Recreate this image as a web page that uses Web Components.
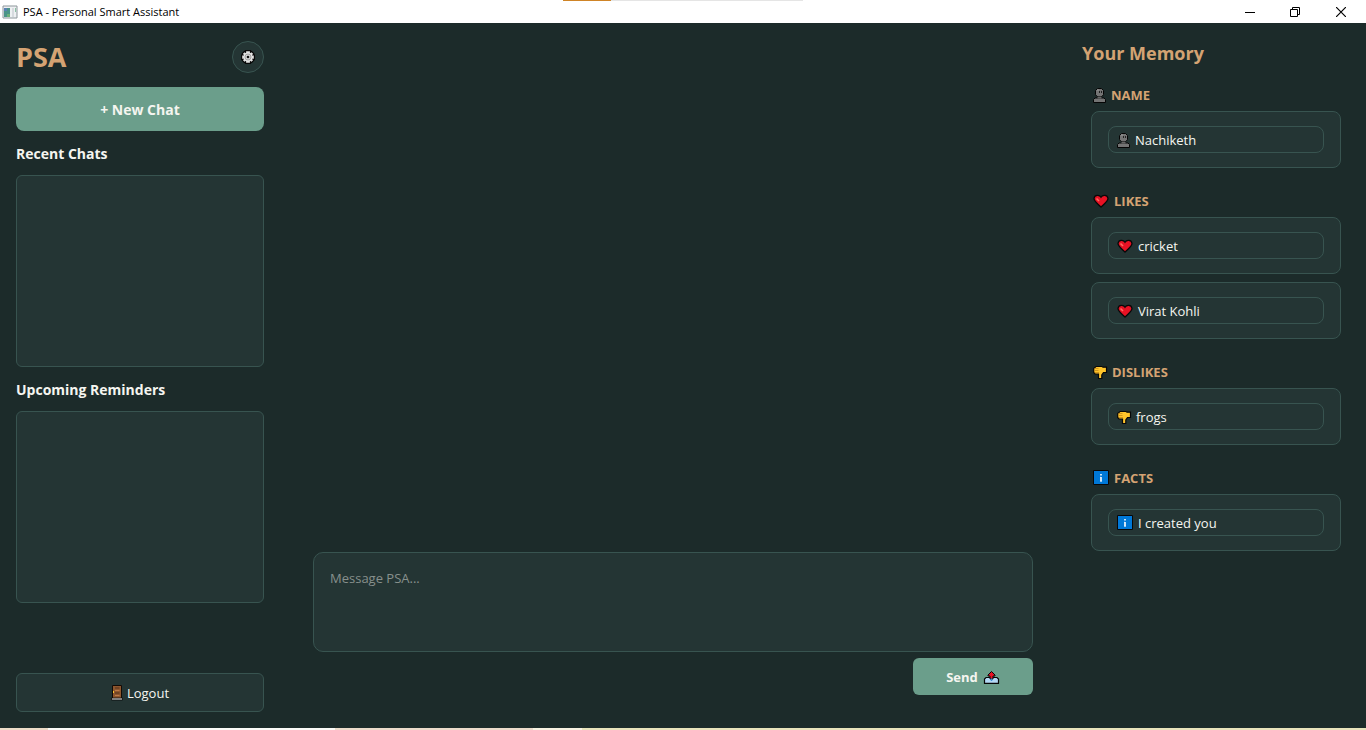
<!DOCTYPE html>
<html lang="en">
<head>
<meta charset="utf-8">
<title>PSA - Personal Smart Assistant</title>
<style>
  html, body {
    height: 100%;
    margin: 0;
  }

  body {
    --bg: #1c2b2a;
    --panel: #243534;
    --line: #385450;
    --accent: #6b9e8b;
    --gold: #d4a373;
    --text: #f5f5f0;
    font-family: "Open Sans", "Noto Sans", sans-serif;
    font-size: 13px;
    line-height: 18px;
    color: var(--text);
    background: var(--bg);
  }
</style>
</head>
<body>
<psa-window>
  <psa-titlebar slot="title">PSA - Personal Smart Assistant</psa-titlebar>
  <psa-sidebar slot="left"></psa-sidebar>
  <psa-composer></psa-composer>
  <psa-memory slot="right">
    <memory-section icon="person" label="NAME">
      <memory-card icon="person">Nachiketh</memory-card>
    </memory-section>
    <memory-section icon="heart" label="LIKES">
      <memory-card icon="heart">cricket</memory-card>
      <memory-card icon="heart">Virat Kohli</memory-card>
    </memory-section>
    <memory-section icon="thumb" label="DISLIKES">
      <memory-card icon="thumb">frogs</memory-card>
    </memory-section>
    <memory-section icon="info" label="FACTS">
      <memory-card icon="info">I created you</memory-card>
    </memory-section>
  </psa-memory>
</psa-window>

<script>
const ICONS = {
  person: { w: 14, h: 16, body: `
    <path d="M.5 15.500V12.500L2 11h9l1.500 1.500v3z" fill="#747474" stroke="#050505"/>
    <path d="M4.500 1.500h4l2 2v4L9 9.500H4L2.500 7.500v-4z" fill="#747474" stroke="#050505"/>
    <path d="M4.500 9.500h4v2h-4z" fill="#666"/>
    <path d="M4 3h2" stroke="#999"/>
    <path d="M6.500 4v2M8.500 4v2" stroke="#222"/>` },
  heart: { w: 17, h: 16, body: `
    <path d="M8 4.200C6.500 1.500 1.500 1.500 1 5.500c0 3 3.500 5 7 8.500 3.500-3.500 7-5.500 7-8.500-.5-4-5.500-4-7-1.300z" fill="#e81224" stroke="#080808" stroke-width="1.300"/>
    <path d="M3.500 5.500l2.500 2.500" stroke="#ff6b62" stroke-width="1.600"/>` },
  thumb: { w: 15, h: 16, body: `
    <path d="M3 2.500h6l1 .7h3.500v5.300h-3L8.800 11v3.500H5.500V10H2L.700 8.500V4.500z" fill="#ffc52b" stroke="#080808" stroke-width="1.200"/>
    <path d="M1.500 4.500h4M1.500 6.500h4M2 8.500h4" stroke="#c98a1a" stroke-width=".8"/>` },
  info: { w: 17, h: 16, body: `
    <path d="M.5.500h15v14H.5z" fill="#0078d7" stroke="#080808"/>
    <path d="M8 4v1.500M8 7v4.500" stroke="#fff" stroke-width="1.600"/>
    <path d="M7 7.300h1M7 11h2" stroke="#e8f3ff" stroke-width=".8"/>` },
  gear: { w: 14, h: 14, body: `
    <path d="M4.500.700h5v1.500l1.200-.7 2 2-.7 1.300h1.400v4.500H12l.7 1.200-2 2-1.200-.7v1.500h-5v-1.500l-1.200.7-2-2 .7-1.200H.6V4.800H2l-.7-1.300 2-2 1.200.7z" fill="#e4e4e4" stroke="#080808" stroke-width="1.200"/>
    <circle cx="7" cy="7" r="3" fill="#d5d5d5" stroke="#a2a2a2"/>
    <circle cx="7" cy="7" r="1.300" fill="#111"/>` },
  door: { w: 12, h: 16, body: `
    <path d="M1.500.500h9v13h-9z" fill="#8e562e" stroke="#120b06"/>
    <path d="M4 3h4.500M4 8h4.500" stroke="#53301a"/>
    <path d="M4 5.500h4.500M4 10.500h4.500" stroke="#bd7a46"/>
    <path d="M2.500 6v2" stroke="#ffc52b"/>
    <path d="M.5 13h11v2H.5z" fill="#d0d0d0" stroke="#080808" stroke-width=".8"/>` },
  outbox: { w: 17, h: 14, body: `
    <path d="M3 7.500h11l1.500 1.500v4.300h-14V9z" fill="#b4d9f5" stroke="#080808" stroke-width="1.200"/>
    <path d="M8.500 1.500L5 5v1h2v3h3V6h2V5z" fill="#e81224" stroke="#080808"/>
    <path d="M8.500 8.500V11" stroke="#3b8ed8" stroke-width="1.500"/>` },
  app: { w: 16, h: 14, body: `
    <path d="M1 1h14v12H1z" fill="#eef0f2" stroke="#8d969b"/>
    <path d="M2 3h6v9H2z" fill="#4b9488"/>
    <path d="M2 3h3v3H2z" fill="#5b82b5"/>
    <path d="M5 9h3v3H5z" fill="#6bb078"/>
    <path d="M10 3h2v9h-2z" fill="#d6dade"/>
    <path d="M13 3h1v4h-1z" fill="#8cc2a5"/>` },
  minimize: { w: 10, h: 10, body: `<path d="M0 5.500h10" stroke="#000"/>` },
  restore: { w: 10, h: 10, body: `<path d="M.5 2.500h7v7h-7zM2.500 2V.500h7v7H8" fill="none" stroke="#000"/>` },
  close: { w: 10, h: 10, body: `<path d="M0 0l10 10M10 0L0 10" stroke="#000" stroke-width="1.200"/>` }
};

function render(el, html) {
  el.attachShadow({ mode: 'open' });
  el.shadowRoot.innerHTML = html;
}

class PsaIcon extends HTMLElement {
  connectedCallback() {
    const icon = ICONS[this.getAttribute('name')];
    render(this, `
      <style>
        :host { display: inline-block; flex: none; line-height: 0; }
      </style>
      <svg width="${icon.w}" height="${icon.h}" viewBox="0 0 ${icon.w} ${icon.h}" fill="none" aria-hidden="true">${icon.body}</svg>
    `);
  }
}

class PsaWindow extends HTMLElement {
  connectedCallback() {
    render(this, `
      <style>
        :host {
          display: flex;
          flex-direction: column;
          min-height: 100vh;
        }

        .columns {
          flex: 1;
          display: grid;
          grid-template-columns: 280px 1fr 300px;
        }

        .edge {
          height: 2px;
          background: linear-gradient(90deg, #eddcc8 3.5%, #fbfbf8 3.5% 24.5%, #ecdccb 24.5% 39%, #f8f3e2 39% 42.6%, #e8e4bc 42.6%);
        }
      </style>
      <slot name="title"></slot>
      <div class="columns">
        <slot name="left"></slot>
        <slot></slot>
        <slot name="right"></slot>
      </div>
      <div class="edge"></div>
    `);
  }
}

class PsaTitlebar extends HTMLElement {
  connectedCallback() {
    render(this, `
      <style>
        :host {
          display: flex;
          align-items: center;
          gap: 5px;
          height: 23px;
          padding: 0 1px 0 2px;
          font-size: 11px;
          color: #000;
          background: linear-gradient(90deg, #fff 41.2%, #cf8426 41.2% 44.7%, #e5e5e5 44.7% 58.8%, #fff 58.8%) top / 100% 1px no-repeat #fff;
        }

        .title { flex: 1; }

        .controls { display: flex; }

        button {
          display: flex;
          align-items: center;
          justify-content: center;
          width: 45px;
          height: 20px;
          padding: 0;
          border: 0;
          background: none;
        }

        button:last-child { width: 48px; }
      </style>
      <psa-icon name="app"></psa-icon>
      <span class="title"><slot></slot></span>
      <div class="controls">
        <button type="button" aria-label="Minimize"><psa-icon name="minimize"></psa-icon></button>
        <button type="button" aria-label="Restore"><psa-icon name="restore"></psa-icon></button>
        <button type="button" aria-label="Close"><psa-icon name="close"></psa-icon></button>
      </div>
    `);
  }
}

class PsaSidebar extends HTMLElement {
  connectedCallback() {
    render(this, `
      <style>
        :host {
          display: flex;
          flex-direction: column;
          gap: 12px;
          padding: 16px;
        }

        header {
          display: flex;
          align-items: center;
          justify-content: space-between;
          height: 36px;
        }

        h1, h2 { margin: 0; font-weight: 700; }

        h1 {
          font-size: 27px;
          line-height: 36px;
          color: var(--gold);
        }

        h2 {
          height: 20px;
          font-size: 14px;
          line-height: 22px;
        }

        button {
          display: flex;
          align-items: center;
          justify-content: center;
          box-sizing: border-box;
          padding: 0;
          border: 1px solid var(--line);
          border-radius: 6px;
          font: inherit;
          color: var(--text);
          background: var(--panel);
        }

        .settings {
          width: 32px;
          height: 32px;
          border-radius: 50%;
        }

        .new {
          height: 44px;
          padding-top: 2px;
          border: 0;
          border-radius: 8px;
          font-size: 14px;
          font-weight: 700;
          background: var(--accent);
        }

        .list {
          box-sizing: border-box;
          height: 192px;
          border: 1px solid var(--line);
          border-radius: 6px;
          background: var(--panel);
        }

        .logout {
          gap: 4px;
          height: 39px;
          margin-top: auto;
        }
      </style>
      <header>
        <h1>PSA</h1>
        <button class="settings" type="button" aria-label="Settings"><psa-icon name="gear"></psa-icon></button>
      </header>
      <button class="new" type="button">+ New Chat</button>
      <h2>Recent Chats</h2>
      <div class="list"></div>
      <h2>Upcoming Reminders</h2>
      <div class="list"></div>
      <button class="logout" type="button"><psa-icon name="door"></psa-icon>Logout</button>
    `);
  }
}

class PsaComposer extends HTMLElement {
  connectedCallback() {
    render(this, `
      <style>
        :host {
          display: flex;
          flex-direction: column;
          justify-content: flex-end;
          padding: 33px;
        }

        form {
          display: flex;
          flex-direction: column;
          gap: 6px;
        }

        textarea {
          display: block;
          box-sizing: border-box;
          width: 100%;
          height: 100px;
          padding: 16px;
          border: 1px solid var(--line);
          border-radius: 10px;
          outline: 0;
          resize: none;
          font: inherit;
          color: var(--text);
          background: var(--panel);
        }

        textarea::placeholder { color: #87908c; }

        button {
          display: flex;
          align-items: center;
          justify-content: center;
          align-self: flex-end;
          gap: 5px;
          width: 120px;
          height: 37px;
          padding: 0;
          border: 0;
          border-radius: 6px;
          font: inherit;
          font-weight: 700;
          color: var(--text);
          background: var(--accent);
        }
      </style>
      <form>
        <textarea aria-label="Message" placeholder="Message PSA..."></textarea>
        <button type="button">Send <psa-icon name="outbox"></psa-icon></button>
      </form>
    `);
  }
}

class PsaMemory extends HTMLElement {
  connectedCallback() {
    render(this, `
      <style>
        :host {
          display: block;
          padding: 16px;
        }

        h2 {
          margin: 0 0 19px;
          font-size: 18px;
          line-height: 28px;
          font-weight: 700;
          color: var(--gold);
        }

        .sections {
          display: flex;
          flex-direction: column;
          gap: 24px;
          padding: 0 9px;
        }
      </style>
      <h2>Your Memory</h2>
      <div class="sections"><slot></slot></div>
    `);
  }
}

class MemorySection extends HTMLElement {
  connectedCallback() {
    render(this, `
      <style>
        :host { display: block; }

        h3 {
          display: flex;
          align-items: center;
          gap: 4px;
          height: 18px;
          margin: 0 0 7px;
          padding-left: 2px;
          font-size: 13px;
          font-weight: 700;
          color: var(--gold);
        }

        .cards {
          display: flex;
          flex-direction: column;
          gap: 8px;
        }
      </style>
      <h3><psa-icon name="${this.getAttribute('icon')}"></psa-icon>${this.getAttribute('label')}</h3>
      <div class="cards"><slot></slot></div>
    `);
  }
}

class MemoryCard extends HTMLElement {
  connectedCallback() {
    render(this, `
      <style>
        :host {
          display: block;
          padding: 14px 16px;
          border: 1px solid var(--line);
          border-radius: 8px;
          background: var(--panel);
        }

        .chip {
          display: flex;
          align-items: center;
          gap: 4px;
          box-sizing: border-box;
          height: 27px;
          padding: 0 8px;
          border: 1px solid var(--line);
          border-radius: 8px;
        }
      </style>
      <div class="chip"><psa-icon name="${this.getAttribute('icon')}"></psa-icon><span><slot></slot></span></div>
    `);
  }
}

customElements.define('psa-icon', PsaIcon);
customElements.define('psa-window', PsaWindow);
customElements.define('psa-titlebar', PsaTitlebar);
customElements.define('psa-sidebar', PsaSidebar);
customElements.define('psa-composer', PsaComposer);
customElements.define('psa-memory', PsaMemory);
customElements.define('memory-section', MemorySection);
customElements.define('memory-card', MemoryCard);
</script>
</body>
</html>
